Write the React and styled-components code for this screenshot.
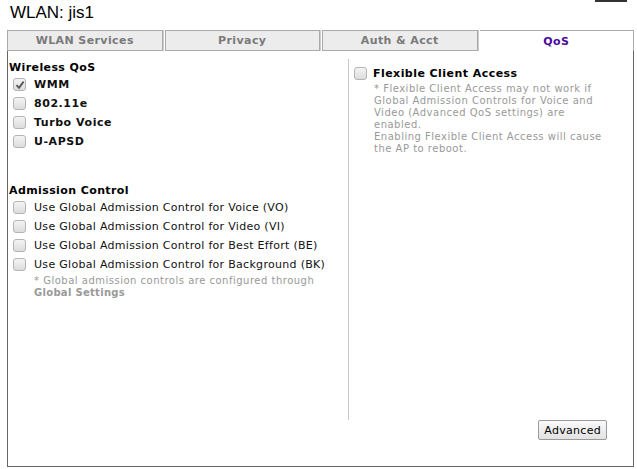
import styled, { createGlobalStyle } from "styled-components";

const GlobalStyle = createGlobalStyle`
body {
  margin: 0;
  background: #fff;
  font-family: "DejaVu Sans", Verdana, sans-serif;
}
`;

const Page = styled.div`
width: 637px;
height: 469px;
position: relative;
overflow: hidden;
`;

const Header = styled.div`
height: 30px;
display: flex;
align-items: flex-start;
padding-left: 10px;
box-sizing: border-box;
`;

const Title = styled.h1`
margin: 0;
padding-top: 4px;
font-family: "Liberation Sans", Arial, sans-serif;
font-size: 17px;
line-height: 18px;
font-weight: normal;
color: #000;
`;

// piece of a close button cut off by the window edge
const CornerBar = styled.div`
position: absolute;
top: 0;
left: 595px;
width: 32px;
height: 2px;
background: #333;
`;

const Tabs = styled.div`
display: flex;
margin-left: 7px;
width: 627px;
`;

const Tab = styled.div`
flex: 1;
height: 21px;
display: flex;
align-items: center;
justify-content: center;
font-size: 11px;
letter-spacing: 0.4px;
font-weight: bold;
box-sizing: border-box;
${(p) =>
  p.active
    ? `
  background: #fff;
  color: #4b0a9a;
  border-top: 1px solid #aaa;
  border-right: 1px solid #aaa;
  `
    : `
  background: #ececec;
  color: #7a7a7a;
  border: 1px solid #aaa;
  margin-right: 2px;
  box-shadow: 1px 0 0 #ccc;
  `}
`;

const Panel = styled.div`
margin-left: 7px;
width: 627px;
height: 416px;
box-sizing: border-box;
border: 1px solid #666;
border-top: none;
display: grid;
grid-template-columns: 340px 1fr;
grid-template-rows: 1fr auto;
`;

const LeftCol = styled.div`
padding: 10px 0 0 1px;
`;

const RightCol = styled.div`
border-left: 1px solid #c8c8c8;
margin-top: 8px;
padding: 7px 0 0 5px;
`;

const Footer = styled.div`
grid-column: 1 / 3;
display: flex;
justify-content: flex-end;
padding: 0 26px 26px 0;
`;

const SectionTitle = styled.div`
font-size: 11px;
letter-spacing: 0.4px;
font-weight: bold;
color: #000;
margin-top: ${(p) => p.gap || 0}px;
height: 14px;
line-height: 13px;
`;

const Row = styled.label`
display: flex;
align-items: center;
height: 19px;
padding-left: 4px;
font-size: 11px;
letter-spacing: ${(p) => (p.bold ? "0.55px" : "0.3px")};
font-weight: ${(p) => (p.bold ? "bold" : "normal")};
color: #111;
`;

const Box = styled.span`
width: 11px;
height: 11px;
border: 1px solid #b4b4b4;
border-radius: 3px;
background: linear-gradient(#f4f4f4, #dcdcdc);
margin-right: ${(p) => p.space || 8}px;
flex-shrink: 0;
display: flex;
align-items: center;
justify-content: center;
`;

const Note = styled.div`
font-size: 10px;
line-height: 12px;
letter-spacing: 0.5px;
color: #999;
padding-left: ${(p) => p.indent || 0}px;
margin-top: ${(p) => p.top || 0}px;
`;

const NoteStrong = styled.div`
font-weight: bold;
letter-spacing: 0.3px;
`;

const FlexRow = styled.div`
display: flex;
align-items: center;
height: 15px;
font-size: 11px;
letter-spacing: 0.45px;
font-weight: bold;
color: #000;
`;

const Button = styled.button`
font-family: "DejaVu Sans", Verdana, sans-serif;
font-size: 11px;
letter-spacing: 0.3px;
color: #000;
height: 20px;
padding: 0 5px;
border: 1px solid #9a9a9a;
border-radius: 2px;
background: linear-gradient(#fafafa, #e2e2e2);
`;

function Check({ checked, space }) {
  return (
    <Box space={space}>
      {checked && (
        <svg width="10" height="10" viewBox="0 0 10 10">
          <path d="M1.5 5.2 L4 7.8 L8.6 1.6" fill="none" stroke="#555" strokeWidth="1.8" />
        </svg>
      )}
    </Box>
  );
}

const wireless = [
  { label: "WMM", checked: true },
  { label: "802.11e" },
  { label: "Turbo Voice" },
  { label: "U-APSD" },
];

const admission = [
  "Use Global Admission Control for Voice (VO)",
  "Use Global Admission Control for Video (VI)",
  "Use Global Admission Control for Best Effort (BE)",
  "Use Global Admission Control for Background (BK)",
];

function App() {
  return (
    <Page>
      <GlobalStyle />
      <CornerBar />
      <Header>
        <Title>WLAN: jis1</Title>
      </Header>
      <Tabs>
        <Tab>WLAN Services</Tab>
        <Tab>Privacy</Tab>
        <Tab>Auth &amp; Acct</Tab>
        <Tab active>QoS</Tab>
      </Tabs>
      <Panel>
        <LeftCol>
          <SectionTitle>Wireless QoS</SectionTitle>
          {wireless.map((w) => (
            <Row bold key={w.label}>
              <Check checked={w.checked} />
              {w.label}
            </Row>
          ))}
          <SectionTitle gap={33}>Admission Control</SectionTitle>
          {admission.map((a) => (
            <Row key={a}>
              <Check />
              {a}
            </Row>
          ))}
          <Note indent={25} top={1}>
            * Global admission controls are configured through
            <NoteStrong>Global Settings</NoteStrong>
          </Note>
        </LeftCol>
        <RightCol>
          <FlexRow>
            <Check space={6} />
            Flexible Client Access
          </FlexRow>
          <Note indent={20} top={2}>
            * Flexible Client Access may not work if
            <br />
            Global Admission Controls for Voice and
            <br />
            Video (Advanced QoS settings) are
            <br />
            enabled.
            <br />
            Enabling Flexible Client Access will cause
            <br />
            the AP to reboot.
          </Note>
        </RightCol>
        <Footer>
          <Button>Advanced</Button>
        </Footer>
      </Panel>
    </Page>
  );
}

export default App;
